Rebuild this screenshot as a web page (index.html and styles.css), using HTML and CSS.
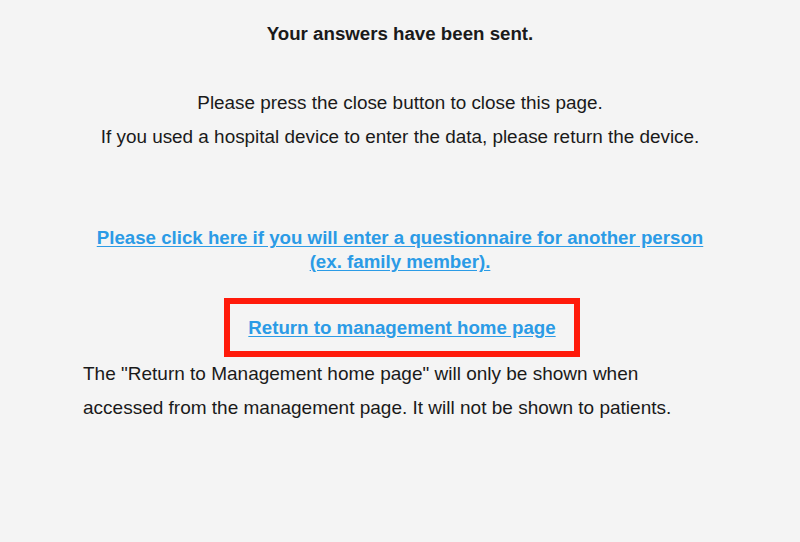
FILE: index.html
```html
<!DOCTYPE html>
<html>
<head>
<meta charset="utf-8">
<link rel="stylesheet" href="styles.css">
</head>
<body>
<div class="page">
  <h1 class="title">Your answers have been sent.</h1>
  <div class="msg">
    <p>Please press the close button to close this page.</p>
    <p>If you used a hospital device to enter the data, please return the device.</p>
  </div>
  <a class="link another" href="#">Please click here if you will enter a questionnaire for another person<br>(ex. family member).</a>
  <div class="highlight">
    <a class="link" href="#">Return to management home page</a>
  </div>
  <p class="note">The "Return to Management home page" will only be shown when accessed from the management page. It will not be shown to patients.</p>
</div>
</body>
</html>
```
FILE: styles.css
```css
html, body {
  margin: 0;
  padding: 0;
  background: #f4f4f4;
}
body {
  font-family: "Liberation Sans", Arial, sans-serif;
  color: #1a1a1a;
}
.page {
  width: 640px;
  margin: 0 auto;
  padding-top: 22px;
  display: flex;
  flex-direction: column;
  align-items: center;
}
.title {
  margin: 0;
  font-size: 18.7px;
  font-weight: bold;
  line-height: 24px;
}
.msg {
  margin-top: 40px;
  text-align: center;
  font-size: 18.9px;
}
.msg p {
  margin: 0;
  line-height: 34px;
}
.link {
  color: #2b9be6;
  font-weight: bold;
  font-size: 18.7px;
  text-decoration: underline;
  text-underline-offset: 2px;
}
.another {
  margin-top: 72px;
  text-align: center;
  line-height: 24px;
}
.highlight {
  margin-top: 24px;
  margin-left: 4px;
  border: 6px solid #ff1a0a;
  width: 344px;
  height: 47px;
  display: flex;
  align-items: center;
  justify-content: center;
}
.note {
  align-self: flex-start;
  width: 610px;
  margin: 0;
  padding-left: 3px;
  font-size: 19px;
  line-height: 34px;
}
```
